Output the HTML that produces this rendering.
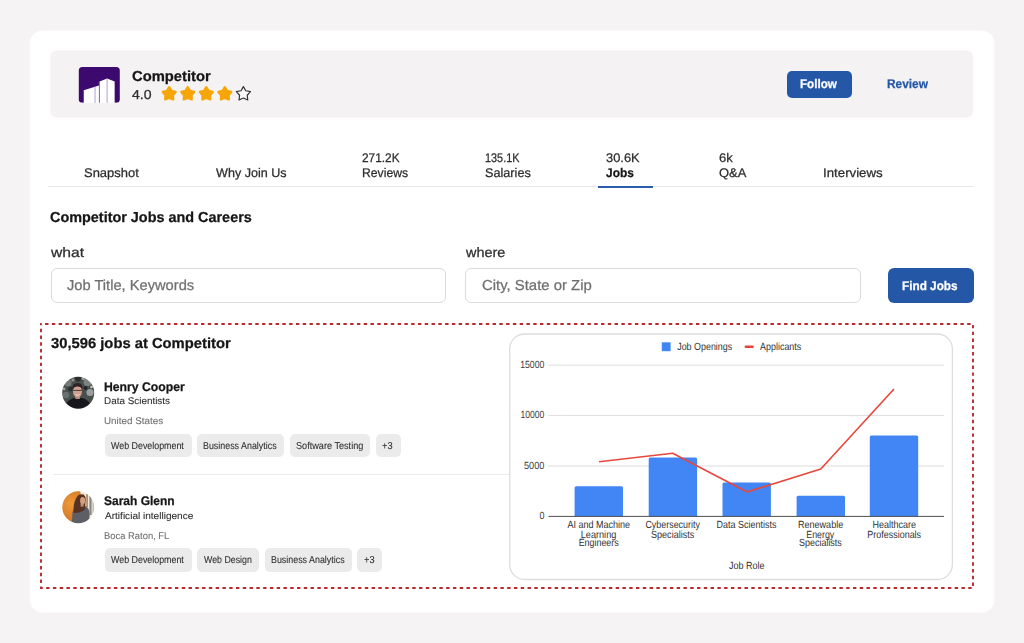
<!DOCTYPE html>
<html lang="en">
<head>
<meta charset="utf-8">
<title>Competitor Jobs and Careers</title>
<style>
*{box-sizing:border-box;margin:0;padding:0}
html,body{width:1024px;height:643px;overflow:hidden}
body{text-rendering:geometricPrecision;background:#f6f3f4;font-family:"Liberation Sans",sans-serif;color:#1f1f1f;position:relative}
.t{position:absolute;white-space:nowrap;line-height:1;transform-origin:0 0}
.card{position:absolute;left:30px;top:30.5px;width:964.5px;height:582px;background:#fff;border-radius:13px}
.hbar{position:absolute;left:50.5px;top:50.6px;width:922.5px;height:67px;background:#f5f2f3;border-radius:6px}
.btn{position:absolute;background:#2557a7;border-radius:5px}
.tabline{position:absolute;left:48px;top:186px;width:926px;height:1px;background:#e9e9e9}
.tabsel{position:absolute;left:598px;top:185.5px;width:54.5px;height:2px;background:#2b5cab}
.input{position:absolute;height:34.5px;border:1.4px solid #dddbd9;border-radius:6px;background:#fff}
.chip{position:absolute;height:23.5px;background:#ebebeb;border-radius:5px}
.sep{position:absolute;left:53px;top:473.5px;width:458px;height:1px;background:#ebebeb}
svg.ov{position:absolute;left:0;top:0;width:1024px;height:643px;overflow:visible}
svg.ov text{font-family:"Liberation Sans",sans-serif;text-rendering:geometricPrecision}
</style>
</head>
<body>
<svg class="ov" viewBox="0 0 1024 643"><rect x="29.8" y="30.5" width="964.6" height="582" rx="13" fill="#fff"/><rect x="50.4" y="50.6" width="922.6" height="67" rx="6" fill="#f5f2f3"/></svg>
<div class="btn" style="left:786.5px;top:71px;width:65.5px;height:26.5px"></div>
<div class="tabline"></div><div class="tabsel"></div>
<div class="input" style="left:51px;top:268px;width:395px"></div>
<div class="input" style="left:465px;top:268px;width:395.5px"></div>
<div class="btn" style="left:887.5px;top:267.5px;width:86px;height:35.5px;border-radius:6px"></div>
<div class="sep"></div>
<!-- chips person 1 -->
<div class="chip" style="left:104.7px;top:433.9px;width:87.3px"></div>
<div class="chip" style="left:197.2px;top:433.9px;width:87.1px"></div>
<div class="chip" style="left:290px;top:433.9px;width:80.4px"></div>
<div class="chip" style="left:376px;top:433.9px;width:24.7px"></div>
<!-- chips person 2 -->
<div class="chip" style="left:104.7px;top:548.4px;width:87.3px"></div>
<div class="chip" style="left:197.2px;top:548.4px;width:62px"></div>
<div class="chip" style="left:264.6px;top:548.4px;width:87.1px"></div>
<div class="chip" style="left:357.3px;top:548.4px;width:24.7px"></div>
<div class="t" style="left:131.6px;top:70px;font-size:14.5px;color:#161616;transform:scaleX(1.0168);font-weight:bold;-webkit-text-stroke:0.25px #161616">Competitor</div>
<div class="t" style="left:132.2px;top:88px;font-size:13px;color:#2d2d2d;transform:scaleX(1.0825);-webkit-text-stroke:0.25px #2d2d2d">4.0</div>
<div class="t" style="left:799.8px;top:78px;font-size:12.5px;color:#fff;transform:scaleX(0.9323);font-weight:bold;-webkit-text-stroke:0.25px #fff">Follow</div>
<div class="t" style="left:887.3px;top:78px;font-size:12.5px;color:#2557a7;transform:scaleX(0.9498);font-weight:bold;-webkit-text-stroke:0.25px #2557a7">Review</div>
<div class="t" style="left:83.9px;top:167px;font-size:12.5px;color:#2d2d2d;transform:scaleX(1.0371);-webkit-text-stroke:0.25px #2d2d2d">Snapshot</div>
<div class="t" style="left:215.7px;top:167px;font-size:12.5px;color:#2d2d2d;transform:scaleX(1.0073);-webkit-text-stroke:0.25px #2d2d2d">Why Join Us</div>
<div class="t" style="left:361.8px;top:152px;font-size:12.5px;color:#2d2d2d;transform:scaleX(0.9500);-webkit-text-stroke:0.25px #2d2d2d">271.2K</div>
<div class="t" style="left:361.5px;top:167px;font-size:12.5px;color:#2d2d2d;transform:scaleX(0.9753);-webkit-text-stroke:0.25px #2d2d2d">Reviews</div>
<div class="t" style="left:484.6px;top:152px;font-size:12.5px;color:#2d2d2d;transform:scaleX(0.8702);-webkit-text-stroke:0.25px #2d2d2d">135.1K</div>
<div class="t" style="left:484.6px;top:167px;font-size:12.5px;color:#2d2d2d;transform:scaleX(1.0132);-webkit-text-stroke:0.25px #2d2d2d">Salaries</div>
<div class="t" style="left:605.9px;top:152px;font-size:12.5px;color:#2d2d2d;transform:scaleX(1.0297);-webkit-text-stroke:0.25px #2d2d2d">30.6K</div>
<div class="t" style="left:606.2px;top:167px;font-size:12.5px;color:#161616;transform:scaleX(0.9547);font-weight:bold;-webkit-text-stroke:0.25px #161616">Jobs</div>
<div class="t" style="left:718.7px;top:152px;font-size:12.5px;color:#2d2d2d;transform:scaleX(1.0407);-webkit-text-stroke:0.25px #2d2d2d">6k</div>
<div class="t" style="left:718.8px;top:167px;font-size:12.5px;color:#2d2d2d;transform:scaleX(1.0347);-webkit-text-stroke:0.25px #2d2d2d">Q&amp;A</div>
<div class="t" style="left:822.8px;top:167px;font-size:12.5px;color:#2d2d2d;transform:scaleX(1.0612);-webkit-text-stroke:0.25px #2d2d2d">Interviews</div>
<div class="t" style="left:50.4px;top:211px;font-size:14.5px;color:#161616;transform:scaleX(0.9937);font-weight:bold;-webkit-text-stroke:0.25px #161616">Competitor Jobs and Careers</div>
<div class="t" style="left:51.1px;top:246px;font-size:13.7px;color:#2d2d2d;transform:scaleX(1.1457);-webkit-text-stroke:0.25px #2d2d2d">what</div>
<div class="t" style="left:465.6px;top:246px;font-size:13.7px;color:#2d2d2d;transform:scaleX(1.0558);-webkit-text-stroke:0.25px #2d2d2d">where</div>
<div class="t" style="left:67.0px;top:279px;font-size:14.5px;color:#6f6f6f;transform:scaleX(1.0113);-webkit-text-stroke:0.25px #6f6f6f">Job Title, Keywords</div>
<div class="t" style="left:481.5px;top:279px;font-size:14.5px;color:#6f6f6f;transform:scaleX(1.0264);-webkit-text-stroke:0.25px #6f6f6f">City, State or Zip</div>
<div class="t" style="left:902.3px;top:280px;font-size:12.5px;color:#fff;transform:scaleX(0.9414);font-weight:bold;-webkit-text-stroke:0.25px #fff">Find Jobs</div>
<div class="t" style="left:50.5px;top:337px;font-size:14.5px;color:#161616;transform:scaleX(1.0182);font-weight:bold;-webkit-text-stroke:0.25px #161616">30,596 jobs at Competitor</div>
<div class="t" style="left:104.2px;top:381px;font-size:12.5px;color:#161616;transform:scaleX(0.9772);font-weight:bold;-webkit-text-stroke:0.25px #161616">Henry Cooper</div>
<div class="t" style="left:104.3px;top:397px;font-size:9.7px;color:#2d2d2d;transform:scaleX(1.0214);-webkit-text-stroke:0.08px #2d2d2d">Data Scientists</div>
<div class="t" style="left:104.3px;top:417px;font-size:9.7px;color:#6f6f6f;transform:scaleX(1.0168);-webkit-text-stroke:0.08px #6f6f6f">United States</div>
<div class="t" style="left:111.1px;top:442px;font-size:10px;color:#2d2d2d;transform:scaleX(0.8873);-webkit-text-stroke:0.08px #2d2d2d">Web Development</div>
<div class="t" style="left:203.2px;top:442px;font-size:10px;color:#2d2d2d;transform:scaleX(0.8884);-webkit-text-stroke:0.08px #2d2d2d">Business Analytics</div>
<div class="t" style="left:296.0px;top:442px;font-size:10px;color:#2d2d2d;transform:scaleX(0.9132);-webkit-text-stroke:0.08px #2d2d2d">Software Testing</div>
<div class="t" style="left:382.1px;top:442px;font-size:10px;color:#2d2d2d;transform:scaleX(0.9335);-webkit-text-stroke:0.08px #2d2d2d">+3</div>
<div class="t" style="left:104.4px;top:495px;font-size:12.5px;color:#161616;transform:scaleX(0.9601);font-weight:bold;-webkit-text-stroke:0.25px #161616">Sarah Glenn</div>
<div class="t" style="left:104.7px;top:512px;font-size:9.7px;color:#2d2d2d;transform:scaleX(1.0382);-webkit-text-stroke:0.08px #2d2d2d">Artificial intelligence</div>
<div class="t" style="left:104.3px;top:532px;font-size:9.7px;color:#6f6f6f;transform:scaleX(0.9705);-webkit-text-stroke:0.08px #6f6f6f">Boca Raton, FL</div>
<div class="t" style="left:111.1px;top:556px;font-size:10px;color:#2d2d2d;transform:scaleX(0.8873);-webkit-text-stroke:0.08px #2d2d2d">Web Development</div>
<div class="t" style="left:203.6px;top:556px;font-size:10px;color:#2d2d2d;transform:scaleX(0.8815);-webkit-text-stroke:0.08px #2d2d2d">Web Design</div>
<div class="t" style="left:270.6px;top:556px;font-size:10px;color:#2d2d2d;transform:scaleX(0.8884);-webkit-text-stroke:0.08px #2d2d2d">Business Analytics</div>
<div class="t" style="left:364.2px;top:556px;font-size:10px;color:#2d2d2d;transform:scaleX(0.9335);-webkit-text-stroke:0.08px #2d2d2d">+3</div>
<svg class="ov" viewBox="0 0 1024 643">
<rect x="41" y="324" width="932" height="264" fill="none" stroke="#ba2a2d" stroke-width="1.9" stroke-dasharray="3.4 3.38" stroke-dashoffset="2.7"/>
<g transform="translate(78.8,67.1) scale(0.9903,1)"><rect width="41.4" height="35.7" rx="3.6" fill="#3c0a6e"/><path d="M5 23.1 L20.4 18.3 L20.4 36 L5 36Z" fill="#fff"/><path d="M21 14.4 L28.6 11.3 L36.2 14.4 L36.2 36 L21 36Z" fill="#fff"/><path d="M16.4 19.6V36M20.7 14.6V36M28.6 11.5V36" stroke="#8f7bb5" stroke-width="0.7" fill="none"/><rect y="35.7" width="41.4" height="1" fill="#f5f2f3"/></g>
<path d="M169.20,87.25 L171.52,90.80 L175.62,91.91 L172.96,95.22 L173.17,99.46 L169.20,97.95 L165.23,99.46 L165.44,95.22 L162.78,91.91 L166.88,90.80Z" fill="#f6a609" stroke="#f6a609" stroke-width="2.3" stroke-linejoin="round"/>
<path d="M187.75,87.25 L190.07,90.80 L194.17,91.91 L191.51,95.22 L191.72,99.46 L187.75,97.95 L183.78,99.46 L183.99,95.22 L181.33,91.91 L185.43,90.80Z" fill="#f6a609" stroke="#f6a609" stroke-width="2.3" stroke-linejoin="round"/>
<path d="M206.30,87.25 L208.62,90.80 L212.72,91.91 L210.06,95.22 L210.27,99.46 L206.30,97.95 L202.33,99.46 L202.54,95.22 L199.88,91.91 L203.98,90.80Z" fill="#f6a609" stroke="#f6a609" stroke-width="2.3" stroke-linejoin="round"/>
<path d="M224.85,87.25 L227.17,90.80 L231.27,91.91 L228.61,95.22 L228.82,99.46 L224.85,97.95 L220.88,99.46 L221.09,95.22 L218.43,91.91 L222.53,90.80Z" fill="#f6a609" stroke="#f6a609" stroke-width="2.3" stroke-linejoin="round"/>
<path d="M243.40,86.60 L245.75,90.76 L250.44,91.71 L247.20,95.24 L247.75,99.99 L243.40,98.00 L239.05,99.99 L239.60,95.24 L236.36,91.71 L241.05,90.76Z" fill="#fbfafa" stroke="#333" stroke-width="1.2" stroke-linejoin="round"/>
<defs><clipPath id="c1"><circle cx="78.2" cy="392.8" r="16"/></clipPath><clipPath id="c2"><circle cx="78.3" cy="507.2" r="16"/></clipPath>
<radialGradient id="og" cx="0.3" cy="0.4" r="0.7"><stop offset="0" stop-color="#ef9a3a"/><stop offset="1" stop-color="#c5671b"/></radialGradient>
<filter id="bl" x="-10%" y="-10%" width="120%" height="120%"><feGaussianBlur stdDeviation="0.55"/></filter></defs>
<g clip-path="url(#c1)"><g filter="url(#bl)"><rect x="60" y="374" width="37" height="38" fill="#4a4f4e"/>
<circle cx="68" cy="383" r="3.6" fill="#747a79"/><circle cx="87.5" cy="382" r="4" fill="#7d8382"/><circle cx="90" cy="392.5" r="3.6" fill="#9a9f9e"/><circle cx="66" cy="395" r="3.2" fill="#6b7170"/><circle cx="78" cy="378.5" r="3" fill="#2a2e2d"/><circle cx="70.5" cy="389" r="2.4" fill="#2b2f2e"/><circle cx="85.5" cy="388" r="2" fill="#24282a"/><circle cx="73" cy="380" r="1.6" fill="#8d9392"/><circle cx="83" cy="378.5" r="1.5" fill="#a0a5a4"/><circle cx="91.5" cy="387" r="1.3" fill="#c4c8c7"/><circle cx="64" cy="389" r="1.4" fill="#9da2a1"/>
<path d="M63 412 L65.5 404.5 Q68.5 399.6 73.5 398 L82.5 398 Q88 399.6 90.5 404.5 L93 412Z" fill="#19191c"/>
<rect x="75.3" y="395" width="4.6" height="4" fill="#b48873"/>
<ellipse cx="77.5" cy="391.6" rx="4.5" ry="6" fill="#cfa08d"/>
<path d="M72.5 389.2 Q72 383 77.6 383 Q83 383 82.5 389.2 Q81 386.4 77.5 386.6 Q74 386.4 72.5 389.2Z" fill="#2a2125"/>
<path d="M73.2 390.4H81.9" stroke="#3a3033" stroke-width="0.9"/><path d="M75.6 394.6 Q77.5 396 79.5 394.6" stroke="#f2e6e0" stroke-width="0.8" fill="none"/></g></g>
<g clip-path="url(#c2)"><g filter="url(#bl)"><rect x="60" y="489" width="37" height="37" fill="url(#og)"/>
<path d="M80 489 L97 489 L97 526 L84 526Z" fill="#ebe7dc"/><rect x="86.2" y="494" width="1.8" height="13" fill="#b98d63"/><rect x="89.4" y="496" width="2.2" height="19" fill="#8b8985"/><rect x="92.5" y="499" width="1.6" height="14" fill="#c7c2b5"/>
<path d="M71.5 526 L72.6 512 Q74.5 506.5 79 504.6 L86.6 506.5 Q89.6 509 89.6 515 L89 526Z" fill="#5d5f65"/>
<path d="M73.6 513 Q73 501 78 495.6 Q80.5 493.4 83.6 494.6 Q86 496.4 85.6 501 L85 509.5 Q80.5 513 73.6 513Z" fill="#573220"/>
<ellipse cx="82.6" cy="500.8" rx="2.5" ry="3.7" fill="#d3a084"/><rect x="80.6" y="503.6" width="3" height="3" fill="#c08e74"/></g></g>
<rect x="509.7" y="334" width="442.7" height="245.5" rx="15" fill="#fff" stroke="#dddddd" stroke-width="1.3"/>
<rect x="548.2" y="364.7" width="395.8" height="1" fill="#dedede"/>
<rect x="548.2" y="414.9" width="395.8" height="1" fill="#dedede"/>
<rect x="548.2" y="465.5" width="395.8" height="1" fill="#dedede"/>
<path d="M574.5999999999999 516.4 V487.8 Q574.5999999999999 486.3 576.0999999999999 486.3 H621.5 Q623.0 486.3 623.0 487.8 V516.4Z" fill="#4285f4"/>
<path d="M648.6999999999999 516.4 V459.1 Q648.6999999999999 457.6 650.1999999999999 457.6 H695.6 Q697.1 457.6 697.1 459.1 V516.4Z" fill="#4285f4"/>
<path d="M722.5 516.4 V484.0 Q722.5 482.5 724.0 482.5 H769.4000000000001 Q770.9000000000001 482.5 770.9000000000001 484.0 V516.4Z" fill="#4285f4"/>
<path d="M796.5999999999999 516.4 V497.2 Q796.5999999999999 495.7 798.0999999999999 495.7 H843.5 Q845.0 495.7 845.0 497.2 V516.4Z" fill="#4285f4"/>
<path d="M869.8 516.4 V437.0 Q869.8 435.5 871.3 435.5 H916.7 Q918.2 435.5 918.2 437.0 V516.4Z" fill="#4285f4"/>
<rect x="548.4" y="515.9" width="395.6" height="1" fill="#505050"/>
<polyline points="599,461.7 672.7,453.3 747.2,491.9 820.8,469 894,389" fill="none" stroke="#e8483c" stroke-width="1.65" stroke-linejoin="round"/>
<rect x="661.8" y="342.3" width="8.8" height="8.9" fill="#4285f4"/>
<rect x="744.6" y="345.4" width="9.2" height="2.5" rx="1" fill="#ea4335"/>
<text x="677.2" y="349.9" font-size="10.4" fill="#333" text-anchor="start" textLength="55.0" lengthAdjust="spacingAndGlyphs">Job Openings</text>
<text x="760.1" y="349.9" font-size="10.4" fill="#333" text-anchor="start" textLength="41.2" lengthAdjust="spacingAndGlyphs">Applicants</text>
<text x="520.2" y="368.0" font-size="10.4" fill="#3c3c3c" text-anchor="start" textLength="24.2" lengthAdjust="spacingAndGlyphs">15000</text>
<text x="520.4" y="418.3" font-size="10.4" fill="#3c3c3c" text-anchor="start" textLength="24.0" lengthAdjust="spacingAndGlyphs">10000</text>
<text x="524.0" y="468.8" font-size="10.4" fill="#3c3c3c" text-anchor="start" textLength="20.4" lengthAdjust="spacingAndGlyphs">5000</text>
<text x="539.4" y="519.4" font-size="10.4" fill="#3c3c3c" text-anchor="start" textLength="5.0" lengthAdjust="spacingAndGlyphs">0</text>
<text x="567.4" y="528.2" font-size="10.4" fill="#333" text-anchor="start" textLength="62.7" lengthAdjust="spacingAndGlyphs">AI and Machine</text>
<text x="580.8" y="537.7" font-size="10.4" fill="#333" text-anchor="start" textLength="35.5" lengthAdjust="spacingAndGlyphs">Learning</text>
<text x="578.7" y="546.4" font-size="10.4" fill="#333" text-anchor="start" textLength="40.0" lengthAdjust="spacingAndGlyphs">Engineers</text>
<text x="645.4" y="528.2" font-size="10.4" fill="#333" text-anchor="start" textLength="54.5" lengthAdjust="spacingAndGlyphs">Cybersecurity</text>
<text x="651.0" y="537.7" font-size="10.4" fill="#333" text-anchor="start" textLength="43.3" lengthAdjust="spacingAndGlyphs">Specialists</text>
<text x="716.6" y="528.2" font-size="10.4" fill="#333" text-anchor="start" textLength="59.8" lengthAdjust="spacingAndGlyphs">Data Scientists</text>
<text x="798.0" y="528.2" font-size="10.4" fill="#333" text-anchor="start" textLength="45.2" lengthAdjust="spacingAndGlyphs">Renewable</text>
<text x="806.3" y="537.7" font-size="10.4" fill="#333" text-anchor="start" textLength="28.0" lengthAdjust="spacingAndGlyphs">Energy</text>
<text x="799.1" y="546.4" font-size="10.4" fill="#333" text-anchor="start" textLength="42.7" lengthAdjust="spacingAndGlyphs">Specialists</text>
<text x="872.4" y="528.2" font-size="10.4" fill="#333" text-anchor="start" textLength="43.6" lengthAdjust="spacingAndGlyphs">Healthcare</text>
<text x="867.3" y="537.7" font-size="10.4" fill="#333" text-anchor="start" textLength="53.8" lengthAdjust="spacingAndGlyphs">Professionals</text>
<text x="728.9" y="568.8" font-size="10.4" fill="#333" text-anchor="start" textLength="35.5" lengthAdjust="spacingAndGlyphs">Job Role</text>
</svg>
</body>
</html>
